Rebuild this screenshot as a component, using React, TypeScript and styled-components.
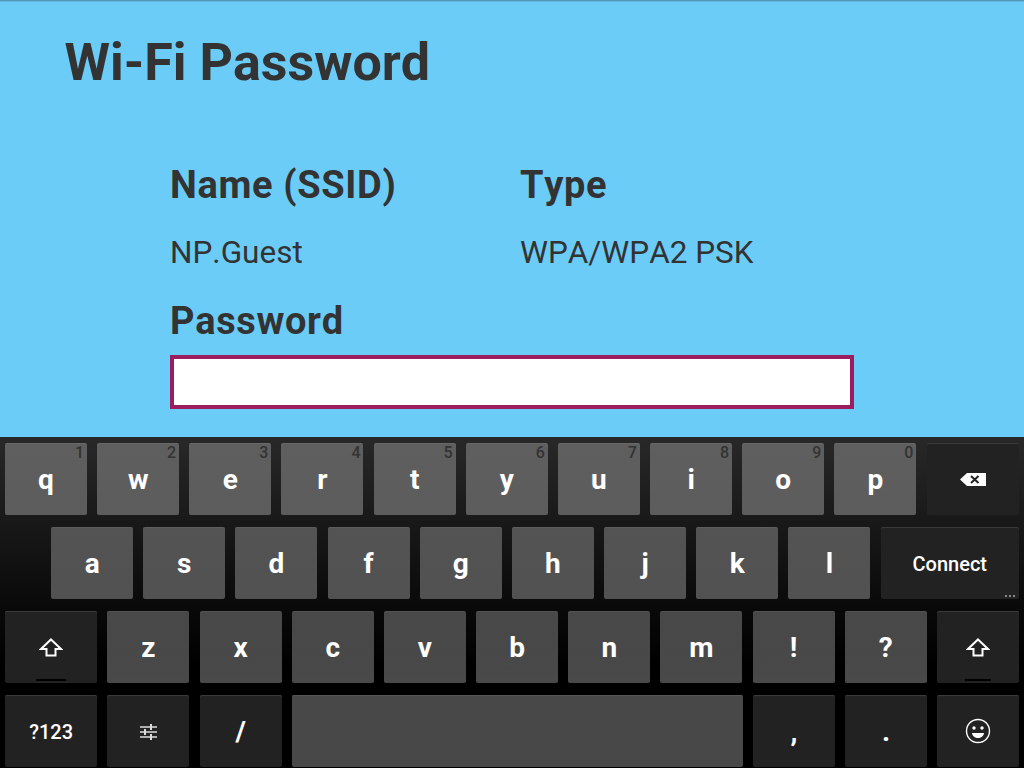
import { createGlobalStyle } from "styled-components"
import styled from "styled-components"

const GlobalStyle = createGlobalStyle`
  html, body {
    margin: 0;
    padding: 0;
    background: #000;
  }
  body {
    font-family: Roboto, "Liberation Sans", sans-serif;
    font-kerning: none;
  }
`

const rows = {
  first: ["q1", "w2", "e3", "r4", "t5", "y6", "u7", "i8", "o9", "p0"],
  second: ["a", "s", "d", "f", "g", "h", "j", "k", "l"],
  third: ["z", "x", "c", "v", "b", "n", "m", "!", "?"],
}

function ShiftIcon() {
  return (
    <svg width="24" height="20" viewBox="0 0 24 20">
      <path d="M12 2.5 L22 12 H16.5 V18.5 H7.5 V12 H2 Z" fill="none" stroke="#fff" strokeWidth="2" />
    </svg>
  )
}

function BackspaceIcon() {
  return (
    <svg width="27" height="14" viewBox="0 0 27 14">
      <path d="M8 1 H27 V14 H8 L1 7.5 Z" fill="#fff" />
      <path d="M12 4 L19.5 11 M19.5 4 L12 11" stroke="#222" strokeWidth="2" />
    </svg>
  )
}

function SettingsIcon() {
  return (
    <svg width="17" height="17" viewBox="0 0 17 17">
      <path d="M0 4 H17 M0 9 H17 M0 14 H17" stroke="#ddd" strokeWidth="1.3" />
      <path d="M11 1 V7 M5 6 V12 M11 11 V17" stroke="#ddd" strokeWidth="2" />
    </svg>
  )
}

function SmileyIcon() {
  return (
    <svg width="26" height="26" viewBox="0 0 26 26">
      <circle cx="13" cy="13" r="11.5" fill="none" stroke="#fff" strokeWidth="1.4" />
      <circle cx="9" cy="10" r="1.7" fill="#fff" />
      <circle cx="17" cy="10" r="1.7" fill="#fff" />
      <path d="M7 15 H19 C18.5 18.5 16 20 13 20 C10 20 7.5 18.5 7 15 Z" fill="#fff" />
    </svg>
  )
}

export default function App() {
  return (
    <Screen>
      <GlobalStyle />
      <Content>
        <Title>Wi-Fi Password</Title>
        <Form>
          <Fields>
            <Label>Name (SSID)</Label>
            <Label>Type</Label>
            <Value>NP.Guest</Value>
            <Value>WPA/WPA2 PSK</Value>
          </Fields>
          <Label>Password</Label>
          <PasswordInput />
        </Form>
      </Content>
      <Keyboard>
        <KeyRow>
          {rows.first.map((k) => (
            <Key key={k}>
              {k[0]}
              <Hint>{k[1]}</Hint>
            </Key>
          ))}
          <FuncKey $width={92.4}>
            <BackspaceIcon />
          </FuncKey>
        </KeyRow>
        <KeyRow $indent={46.15}>
          {rows.second.map((k) => (
            <Key key={k}>{k}</Key>
          ))}
          <FuncKey $width={138.4} $small>
            Connect
            <MoreDots />
          </FuncKey>
        </KeyRow>
        <KeyRow>
          <FuncKey $width={92.3}>
            <ShiftIcon />
            <ShiftBar />
          </FuncKey>
          {rows.third.map((k) => (
            <Key key={k}>{k}</Key>
          ))}
          <FuncKey $width={82}>
            <ShiftIcon />
            <ShiftBar />
          </FuncKey>
        </KeyRow>
        <KeyRow>
          <FuncKey $width={92.3} $small>?123</FuncKey>
          <FuncKey $width={82}>
            <SettingsIcon />
          </FuncKey>
          <FuncKey $width={82}>/</FuncKey>
          <SpaceKey />
          <FuncKey $width={82}>,</FuncKey>
          <FuncKey $width={82}>.</FuncKey>
          <FuncKey $width={82}>
            <SmileyIcon />
          </FuncKey>
        </KeyRow>
      </Keyboard>
    </Screen>
  )
}

const Screen = styled.div`
  width: 1024px;
  height: 768px;
  overflow: hidden;
  display: flex;
  flex-direction: column;
  background: #6bcdf7;
  color: #333;
`

const Content = styled.div`
  height: 437px;
  box-sizing: border-box;
  padding: 35px 0 0 64.5px;
  background: linear-gradient(#5596b5 0 1px, #62b8df 1px 2px, #6bcdf7 2px);
`

const Title = styled.h1`
  margin: 0;
  font-size: 52px;
  line-height: 56px;
  font-weight: 700;
`

const Form = styled.div`
  margin: 72px 0 0 105.5px;
  width: 684px;
`

const Fields = styled.div`
  display: grid;
  grid-template-columns: 350px 1fr;
  row-gap: 28px;
  margin-bottom: 28px;
`

const Label = styled.div`
  font-size: 38px;
  line-height: 44px;
  font-weight: 700;
  letter-spacing: 0.65px;
`

const Value = styled.div`
  font-size: 31.5px;
  line-height: 36px;
`

const PasswordInput = styled.div`
  box-sizing: border-box;
  height: 54px;
  margin-top: 12px;
  background: #fff;
  border: 4px solid #9c1c60;
`

const Keyboard = styled.div`
  flex: 1;
  box-sizing: border-box;
  padding: 6px 0 0 5px;
  display: flex;
  flex-direction: column;
  gap: 12px;
  background: linear-gradient(#282828, #0a0a0a 50%, #000 70%);
`

const KeyRow = styled.div<{ $indent?: number }>`
  display: flex;
  gap: 10.16px;
  margin-left: ${(p) => p.$indent ?? 0}px;
  height: 72px;
  flex: none;
`

const BaseKey = styled.div`
  position: relative;
  flex: none;
  height: 72px;
  border-radius: 2px;
  display: flex;
  align-items: center;
  justify-content: center;
  color: #fff;
  font-size: 28px;
  font-weight: 700;
`

const Key = styled(BaseKey)`
  width: 82px;
  background: linear-gradient(rgba(255, 255, 255, 0.26), rgba(255, 255, 255, 0.29));
  box-shadow: inset 0 1px 0 rgba(255, 255, 255, 0.06);
`

const FuncKey = styled(BaseKey)<{ $width: number; $small?: boolean }>`
  width: ${(p) => p.$width}px;
  background: #222;
  box-shadow: inset 0 1px 0 #3a3a3a;
  ${(p) => p.$small && "font-size: 20px; font-weight: 500; padding-top: 2px; box-sizing: border-box;"}
`

const SpaceKey = styled(BaseKey)`
  width: 451px;
  background: #484848;
  box-shadow: inset 0 1px 0 #555;
`

const Hint = styled.span`
  position: absolute;
  top: 1px;
  right: 3px;
  font-size: 16px;
  font-weight: 500;
  line-height: 18px;
  color: #333;
`

const ShiftBar = styled.span`
  position: absolute;
  left: 50%;
  bottom: 2px;
  width: 32%;
  height: 2px;
  transform: translateX(-50%);
  background: #000;
`

const MoreDots = styled.span`
  position: absolute;
  right: 4px;
  bottom: 2px;
  width: 10px;
  height: 2px;
  background: repeating-linear-gradient(90deg, #888 0 2px, transparent 2px 4px);
`
